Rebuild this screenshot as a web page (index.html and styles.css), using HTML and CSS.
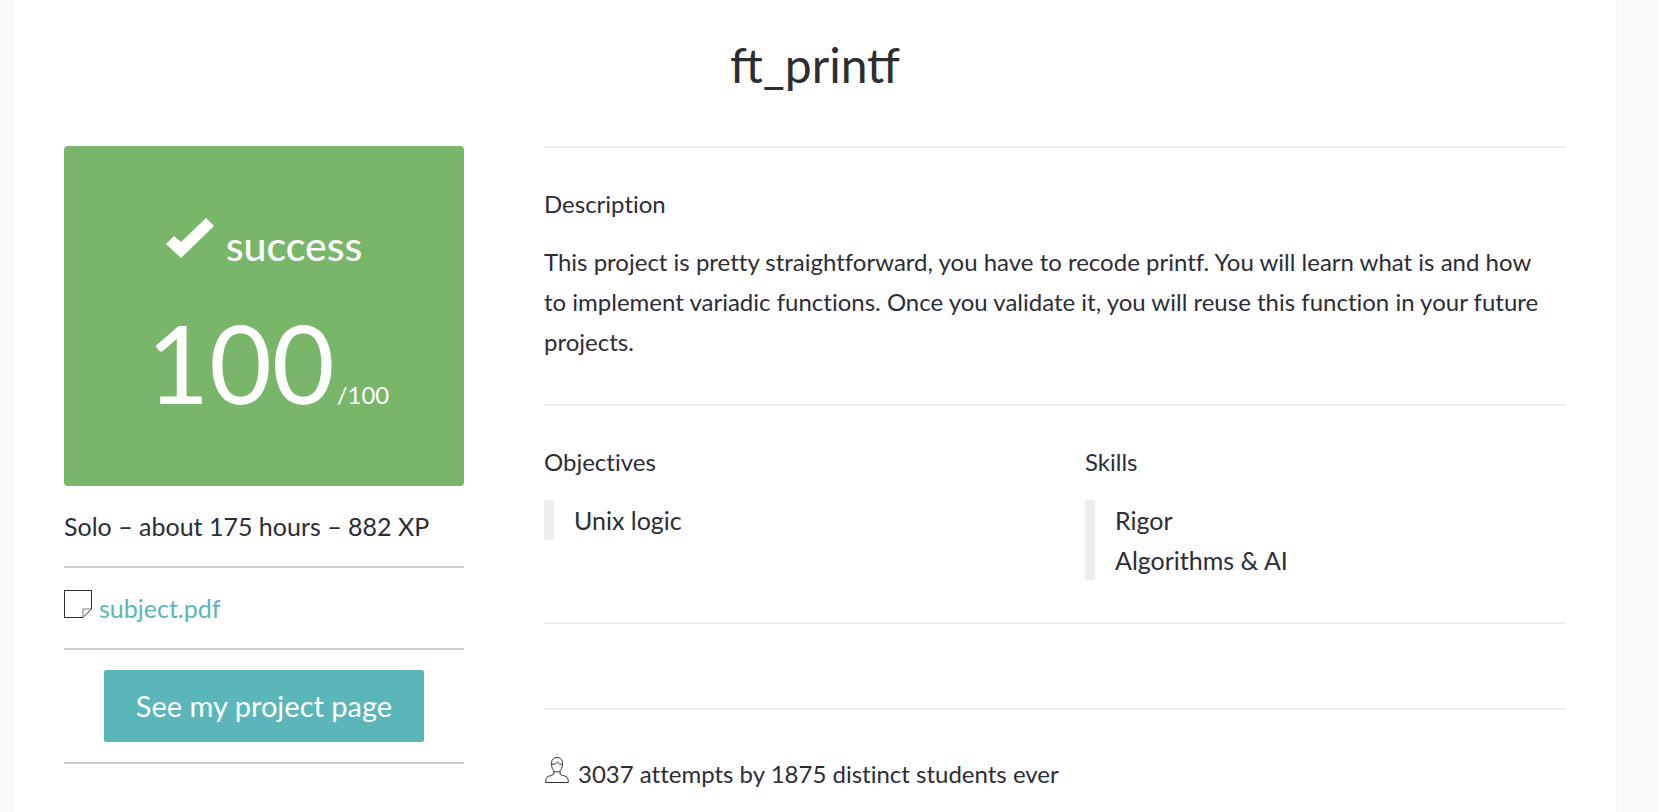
FILE: index.html
```html
<!DOCTYPE html>
<html lang="en">
<head>
<meta charset="utf-8">
<meta name="viewport" content="width=device-width, initial-scale=1">
<title>ft_printf</title>
<link rel="stylesheet" href="styles.css">
</head>
<body>
<main class="panel">
  <h1 class="title">ft_printf</h1>
  <div class="columns">
    <aside class="sidebar">
      <div class="result">
        <div class="status">
          <svg class="check-icon" viewBox="0 0 48 40" aria-hidden="true"><path d="M0 26 8 18 15 24 40 0 48 8 15 40Z"/></svg>
          <span>success</span>
        </div>
        <div class="score"><span class="mark">100</span><span class="total">/100</span></div>
      </div>
      <div class="side-row">Solo – about 175 hours – 882 XP</div>
      <div class="side-row attachment">
        <svg class="note-icon" viewBox="0 0 28 28" aria-hidden="true"><path d="M.5.5H27.5V19L19 27.5H.5Z"/><path class="fold" d="M19 27.5V19H27.5"/></svg>
        <a class="link" href="#subject">subject.pdf</a>
      </div>
      <div class="side-row action"><a class="button" href="#project">See my project page</a></div>
    </aside>
    <div class="details">
      <section class="section">
        <h2 class="heading">Description</h2>
        <p class="text">This project is pretty straightforward, you have to recode printf. You will learn what is and how to implement variadic functions. Once you validate it, you will reuse this function in your future projects.</p>
      </section>
      <section class="section split">
        <div>
          <h2 class="heading">Objectives</h2>
          <ul class="list"><li>Unix logic</li></ul>
        </div>
        <div>
          <h2 class="heading">Skills</h2>
          <ul class="list"><li>Rigor</li><li>Algorithms &amp; AI</li></ul>
        </div>
      </section>
      <section class="section"></section>
      <section class="section attempts">
        <svg class="user-icon" viewBox="0 0 24 28" aria-hidden="true"><path d="M9 15V18C8 19.500 5 19.500 3 20.500C1 21.500 .7 23.500 .7 26.500H23.300C23.300 23.500 23 21.500 21 20.500C19 19.500 16 19.500 15 18V15M6.500 7.500C6.500 3.500 8.500 1.500 12 1.500S17.500 3.500 17.500 7.500C17.500 12.500 15.500 16 12 16S6.500 12.500 6.500 7.500ZM6.500 8.500Q11 8.500 12.500 6Q14 8.500 17.500 8.500"/></svg>
        <span>3037 attempts by 1875 distinct students ever</span>
      </section>
    </div>
  </div>
</main>
</body>
</html>
```
FILE: styles.css
```css
* {
  box-sizing: border-box;
}

body {
  margin: 0;
  background: #fafafa;
  color: #2d2d34;
  font-family: "Futura PT", Lato, sans-serif;
  font-size: 25px;
  line-height: 40px;
}

.panel {
  min-height: 100vh;
  margin: 0 40px 0 12px;
  padding: 30px 50px 0;
  background: #fff;
  border: solid #f8f8f8;
  border-width: 0 2px;
}

.title {
  margin: 0 0 46px;
  font-size: 48px;
  font-weight: 400;
  line-height: 70px;
  text-align: center;
}

.columns {
  display: grid;
  grid-template-columns: 400px minmax(0, 1fr);
  gap: 80px;
}

.result {
  display: flex;
  flex-direction: column;
  align-items: center;
  gap: 30px;
  min-height: 340px;
  padding-top: 70px;
  background: #79b669;
  border-radius: 4px;
  color: #fff;
}

.status {
  display: flex;
  align-items: center;
  gap: 12px;
  font-size: 41px;
  font-weight: 500;
  line-height: 60px;
}

.check-icon {
  width: 48px;
  height: 40px;
  margin-bottom: 16px;
  fill: currentColor;
}

.score {
  display: flex;
  align-items: baseline;
  gap: 2px;
  padding-left: 8px;
  line-height: 112px;
}

.mark {
  font-size: 108px;
}

.total {
  font-size: 24px;
}

.side-row {
  padding: 20px 0;
  border-bottom: 2px solid #ccc;
}

.attachment {
  display: flex;
  align-items: center;
  gap: 7px;
}

.note-icon {
  width: 28px;
  height: 28px;
  margin-bottom: 8px;
  fill: none;
  stroke: #2d2d34;
}

.fold {
  stroke: #77777c;
}

.link {
  color: #5bb6ba;
  text-decoration: none;
}

.action {
  padding-right: 40px;
  padding-left: 40px;
}

.button {
  display: block;
  background: #5bb6ba;
  border-radius: 2px;
  color: #fff;
  font-size: 29px;
  line-height: 72px;
  text-align: center;
  text-decoration: none;
}

.details {
  font-variant-ligatures: none;
}

.section {
  padding: 42px 0;
  border-top: 2px solid #eee;
}

.heading {
  margin: 0 0 24px;
  font-size: 24px;
  font-weight: 400;
  line-height: 28px;
}

.text {
  margin: 0;
  padding-right: 10px;
  font-size: 24px;
}

.split {
  display: grid;
  grid-template-columns: 1fr 1fr;
  gap: 60px;
}

.list {
  margin: 0;
  padding-left: 20px;
  border-left: 10px solid #eee;
  list-style: none;
}

.attempts {
  display: flex;
  align-items: center;
  gap: 8px;
  font-size: 24px;
  line-height: 44px;
}

.user-icon {
  width: 24px;
  height: 28px;
  margin: 0 1px 8px;
  fill: none;
  stroke: #2d2d34;
}
```
